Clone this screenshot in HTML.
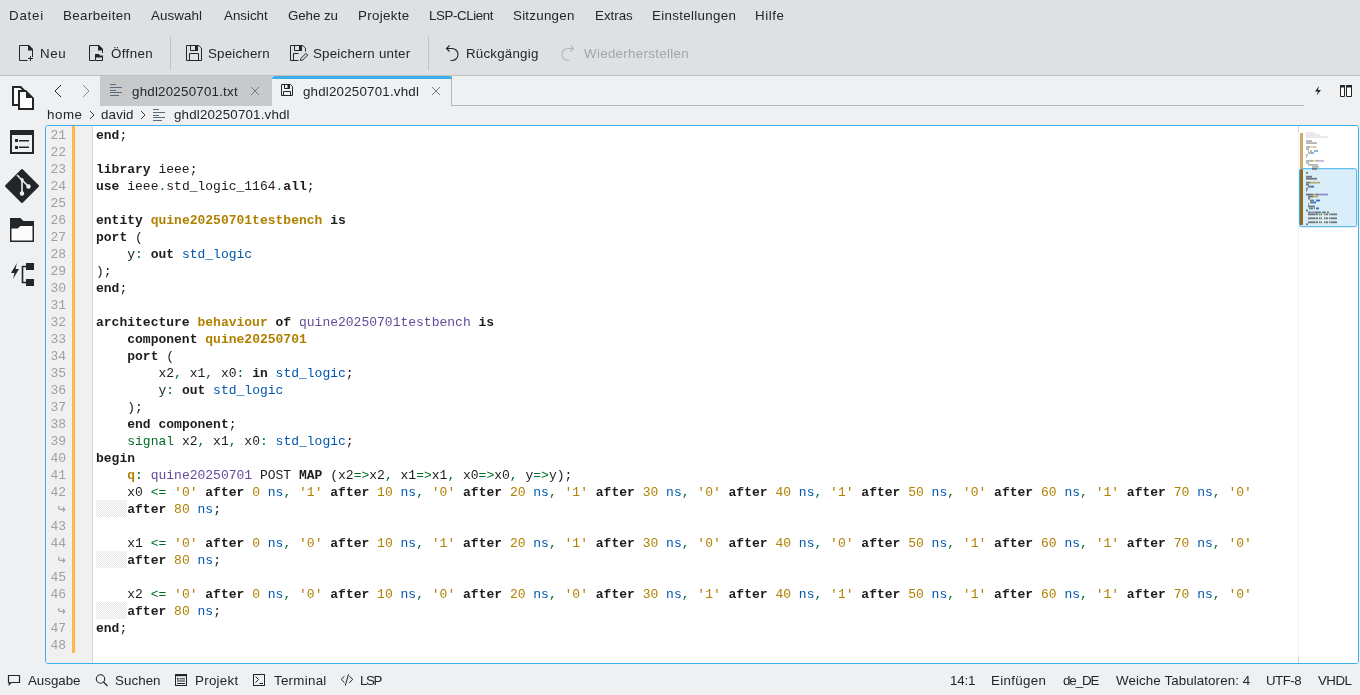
<!DOCTYPE html>
<html><head><meta charset="utf-8">
<style>
*{margin:0;padding:0;box-sizing:border-box}
html,body{width:1360px;height:695px;overflow:hidden;background:#eff0f1;font-family:"Liberation Sans",sans-serif;font-size:13.333px;color:#232629}
.a{position:absolute;white-space:pre}
#hdr{position:absolute;left:0;top:0;width:1360px;height:75px;background:#dee0e2}
#hdrline{position:absolute;left:0;top:75px;width:1360px;height:1px;background:#bdbfc1}
.mi{position:absolute;top:8px;line-height:16px;white-space:pre}
.tb{position:absolute;top:46px;line-height:16px;white-space:pre}
.sep{position:absolute;top:37px;width:1px;height:33px;background:#c0c2c4}
svg{position:absolute;overflow:visible}
#frame{position:absolute;left:45px;top:125px;width:1314px;height:539px;border:1px solid #3daee9;border-radius:3px;background:#fff;overflow:hidden}
#gutter{position:absolute;left:0;top:0;width:46px;height:100%;background:#f0f0f0}
#gsep{position:absolute;left:46px;top:0;width:1px;height:100%;background:#d6d6d6}
#mod{position:absolute;left:26px;top:0;width:3px;height:527px;background:#fdb749}
.ln{position:absolute;left:0;width:20px;margin-top:1px;text-align:right;font-family:"Liberation Mono",monospace;font-size:13px;line-height:17px;color:#a0a0a0}
.ln.wr{font-family:"Liberation Sans",sans-serif;font-size:11px;color:#a0a0a0}
#code{position:absolute;left:50px;top:1px}
.cl{position:absolute;left:0;white-space:pre;font-family:"Liberation Mono",monospace;font-size:13px;line-height:17px;color:#1f1c1b;letter-spacing:0.004px}
.cl b{font-weight:bold}
.cl i{font-style:normal}
.o{color:#006e28}.d{color:#b08000}.t{color:#0057ae}.f{color:#644a9b}
.wp{position:absolute;left:0;width:31px;height:17px;background-image:repeating-conic-gradient(#e4e4e4 0 25%,#fff 0 50%);background-size:2px 2px}
#mm{position:absolute;left:1252px;top:0;width:62px;height:100%;background:#fff}
.st{position:absolute;top:673px;line-height:16px;white-space:pre}
.tt{position:absolute;top:84px;line-height:16px;white-space:pre}
.bc{position:absolute;top:107px;line-height:16px;white-space:pre}
.mi,.tb,.st,.tt,.bc,.a,#code,#nums{will-change:transform}
</style></head><body>
<div id="hdr"></div>
<div id="hdrline"></div>
<!-- menu -->
<!-- toolbar -->
<div class="sep" style="left:170px"></div>
<div class="sep" style="left:428px"></div>
<!-- tab bar -->
<div style="position:absolute;left:100px;top:76px;width:172px;height:30px;background:#c8c9cb"></div>
<div style="position:absolute;left:272px;top:76px;width:180px;height:30px;border-right:1px solid #b6b8ba"></div>
<div style="position:absolute;left:272px;top:76px;width:180px;height:3px;background:#3daee9;border-radius:3px 3px 0 0"></div>
<div style="position:absolute;left:451px;top:105px;width:853px;height:1px;background:#b6b8ba"></div>
<svg width="1360" height="695" style="left:0;top:0" fill="none" stroke="#232629" stroke-width="1">
 <!-- New -->
 <path d="M27.5,60.5H19.5V45.5H28.5M32.5,50V57" />
 <path d="M28,45H29L33,49V50.5H28Z" fill="#232629" stroke="none"/>
 <path d="M30.5,56V61M28,58.5H33" />
 <!-- Open -->
 <path d="M95,60.5H89.5V45.5H98.5M102.5,50V53" />
 <path d="M98,45H99L103,49V50.5H98Z" fill="#232629" stroke="none"/>
 <path d="M95.5,54.5V60.5H102.5V56.5" />
 <path d="M95,54H99L100,55.5H103V57.5H95Z" fill="#232629" stroke="none"/>
 <!-- Save -->
 <path d="M186.5,45.5H198.8L201.5,48.2V60.5H186.5Z" />
 <path d="M190.5,45.5V50.5H197.5V45.5M189.5,60.5V53.5H198.5V60.5" />
 <rect x="195" y="45" width="3" height="6" fill="#232629" stroke="none"/>
 <!-- Save as -->
 <path d="M298.5,60.5H290.5V45.5H302.8L305.5,48.2V51.5" />
 <path d="M294.5,45.5V50.5H301.5V45.5M293.5,60V53.5H298.5" />
 <rect x="299" y="45" width="3" height="6" fill="#232629" stroke="none"/>
 <path d="M300.5,60.5L300.8,58.5L306,53.3L307.7,55L302.5,60.2Z" stroke-width="1"/>
 <!-- Undo -->
 <path d="M446.5,48.5H452A6,6 0 0 1 452,60.5H450.5M449.5,45.5L446.5,48.5L449.5,51.5" stroke-width="1.1"/>
 <!-- Redo -->
 <path d="M573.5,48.5H568A6,6 0 0 0 568,60.5H569.5M570.5,45.5L573.5,48.5L570.5,51.5" stroke="#b4b6b8" stroke-width="1.1"/>
 <!-- tab nav -->
 <path d="M61,85L55,91L61,97" />
 <path d="M83,85L89,91L83,97" stroke="#8a8c8e"/>
 <!-- txt icon -->
 <path d="M110,84.5H116M110,87.5H122M110,90.5H116M110,92.5H122M110,95.5H119" stroke="#5c6b7e"/>
 <!-- close x -->
 <path d="M251,87L259,95M259,87L251,95" stroke="#77797b"/>
 <path d="M432,87L440,95M440,87L432,95" stroke="#77797b"/>
 <!-- active tab save icon -->
 <path d="M281.5,84.5H290.5L292.5,86.5V95.5H281.5Z" />
 <path d="M284.5,84.5V88.5H289.5V84.5M283.5,95.5V91.5H290.5V95.5" />
 <rect x="287.5" y="84" width="2" height="5" fill="#232629" stroke="none"/>
 <!-- breadcrumb -->
 <path d="M90,111L94,115L90,119M141,111L145,115L141,119" stroke="#31363b"/>
 <path d="M153,109.5H159M153,112.5H165M153,115.5H159M153,117.5H165M153,120.5H162" stroke="#5c6b7e"/>
 <!-- right icons -->
 <path d="M1319,86L1315,91.5H1318L1316.5,95.5L1321,90H1318Z" fill="#232629" stroke="none"/>
 <path d="M1340.5,85.5H1344.5V96.5H1340.5ZM1346.5,85.5H1351.5V96.5H1346.5Z" fill="#fcfcfc"/>
 <rect x="1340" y="85" width="5" height="2.5" fill="#232629" stroke="none"/>
 <rect x="1346" y="85" width="6" height="2.5" fill="#232629" stroke="none"/>
 <!-- sidebar: documents -->
 <path d="M12,86H21L25,90V106H12Z" fill="#232629" stroke="none"/>
 <path d="M14,88H20L23,91V104H14Z" fill="#fcfcfc" stroke="none"/>
 <path d="M18,90H26L34,98V110H18Z" fill="#232629" stroke="none"/>
 <path d="M20,92H26V98H32V108H20Z" fill="#fcfcfc" stroke="none"/>
 <!-- sidebar: toc -->
 <path d="M10,130H34V154H10Z M12,135V152H32V135Z" fill="#232629" stroke="none" fill-rule="evenodd"/>
 <rect x="15" y="139" width="3" height="3" fill="#232629" stroke="none"/>
 <rect x="15" y="146" width="3" height="3" fill="#232629" stroke="none"/>
 <rect x="19" y="140" width="10" height="1.5" fill="#232629" stroke="none"/>
 <rect x="19" y="146.5" width="10" height="1.5" fill="#232629" stroke="none"/>
 <!-- sidebar: git -->
 <path d="M22,170L38,186L22,202L6,186Z" fill="#232629" stroke="#232629" stroke-width="2" stroke-linejoin="round"/>
 <path d="M17,175L22,180V194M22,180L28.5,186.5" stroke="#eff0f1" stroke-width="1.6"/>
 <circle cx="22" cy="179.5" r="1.6" fill="#eff0f1" stroke="none"/>
 <circle cx="28.5" cy="186.5" r="2.2" fill="#eff0f1" stroke="none"/>
 <circle cx="22" cy="193.5" r="2.2" fill="#eff0f1" stroke="none"/>
 <!-- sidebar: folder -->
 <path d="M10.75,224.75H33.25V241.25H10.75Z" stroke-width="1.5" fill="#fcfcfc"/>
 <path d="M10,218H20.5L23.5,221H34V226H20.5L17.5,228.5H10Z" fill="#232629" stroke="none"/>
 <!-- sidebar: bolt/tree -->
 <path d="M17,263L11,273H14.5L13,279L19,269H15.5Z" fill="#232629" stroke="none"/>
 <rect x="26" y="263" width="8" height="7" fill="#232629" stroke="none"/>
 <rect x="26" y="279" width="8" height="7" fill="#232629" stroke="none"/>
 <path d="M26,266.5H22.5V282.5H26" stroke-width="1.6"/>
 <!-- status icons -->
 <path d="M8.5,675.5H19.5V682.5H11L9.2,684.5V682.5H8.5Z" stroke-width="1.2"/>
 <circle cx="100.5" cy="679" r="4.2" stroke-width="1.1"/>
 <path d="M103.5,682L107.5,686" stroke-width="1.2"/>
 <rect x="175.5" y="674.5" width="11" height="11" />
 <rect x="175" y="674" width="12" height="2.2" fill="#232629" stroke="none"/>
 <rect x="177" y="678" width="1.6" height="1.6" fill="#232629" stroke="none"/>
 <path d="M179.5,678.8H185M177,681H185M177,683.5H185" />
 <rect x="253.5" y="674.5" width="11" height="11" />
 <path d="M255.5,676.5L258.5,679.5L255.5,682.5M259.5,683.5H263" />
 <path d="M344.5,676.2L341.2,679.4L344.5,682.7M349.3,676.2L352.8,679.4L349.3,682.7M348.5,674.2L345.3,685.5" />
</svg>

<div class="mi" id="tx0" style="left:9.42px;letter-spacing:0.760px;">Datei</div>
<div class="mi" id="tx1" style="left:62.92px;letter-spacing:0.391px;">Bearbeiten</div>
<div class="mi" id="tx2" style="left:151.30px;letter-spacing:0.107px;">Auswahl</div>
<div class="mi" id="tx3" style="left:223.64px;letter-spacing:0.000px;">Ansicht</div>
<div class="mi" id="tx4" style="left:288.22px;letter-spacing:-0.080px;">Gehe zu</div>
<div class="mi" id="tx5" style="left:357.50px;letter-spacing:0.320px;">Projekte</div>
<div class="mi" id="tx6" style="left:428.50px;letter-spacing:-0.409px;">LSP-CLient</div>
<div class="mi" id="tx7" style="left:513.08px;letter-spacing:0.260px;">Sitzungen</div>
<div class="mi" id="tx8" style="left:594.92px;letter-spacing:0.000px;">Extras</div>
<div class="mi" id="tx9" style="left:652.00px;letter-spacing:0.320px;">Einstellungen</div>
<div class="mi" id="tx10" style="left:755.04px;letter-spacing:0.560px;">Hilfe</div>
<div class="tb" id="tx11" style="left:40.08px;letter-spacing:0.640px;">Neu</div>
<div class="tb" id="tx12" style="left:111.30px;letter-spacing:0.384px;">Öffnen</div>
<div class="tb" id="tx13" style="left:208.42px;letter-spacing:0.200px;">Speichern</div>
<div class="tb" id="tx14" style="left:313.46px;letter-spacing:0.217px;">Speichern unter</div>
<div class="tb" id="tx15" style="left:466.08px;letter-spacing:0.213px;">Rückgängig</div>
<div class="tb" id="tx16" style="left:583.64px;letter-spacing:0.309px;color:#a3a5a7">Wiederherstellen</div>
<div class="tt" id="tx17" style="left:132.30px;letter-spacing:0.224px;">ghdl20250701.txt</div>
<div class="tt" id="tx18" style="left:303.30px;letter-spacing:0.200px;">ghdl20250701.vhdl</div>
<div class="bc" id="tx19" style="left:46.96px;letter-spacing:0.533px;">home</div>
<div class="bc" id="tx20" style="left:100.72px;letter-spacing:0.160px;">david</div>
<div class="bc" id="tx21" style="left:173.72px;letter-spacing:0.180px;">ghdl20250701.vhdl</div>
<div class="st" id="tx22" style="left:28.34px;letter-spacing:-0.027px;">Ausgabe</div>
<div class="st" id="tx23" style="left:115.04px;letter-spacing:0.064px;">Suchen</div>
<div class="st" id="tx24" style="left:194.54px;letter-spacing:0.293px;">Projekt</div>
<div class="st" id="tx25" style="left:273.80px;letter-spacing:0.274px;">Terminal</div>
<div class="st" id="tx26" style="left:360.42px;letter-spacing:-1.440px;">LSP</div>
<div class="st" id="tx27" style="left:949.96px;letter-spacing:-0.213px;">14:1</div>
<div class="st" id="tx28" style="left:990.58px;letter-spacing:0.320px;">Einfügen</div>
<div class="st" id="tx29" style="left:1062.72px;letter-spacing:-1.080px;">de_DE</div>
<div class="st" id="tx30" style="left:1115.80px;letter-spacing:0.104px;">Weiche Tabulatoren: 4</div>
<div class="st" id="tx31" style="left:1265.54px;letter-spacing:-0.520px;">UTF-8</div>
<div class="st" id="tx32" style="left:1317.68px;letter-spacing:-0.533px;">VHDL</div>
<!-- editor -->
<div id="frame">
  <div id="gutter">
    <div id="mod"></div>
    <div id="nums" style="position:absolute;left:0;top:0">
<div class="ln" style="top:0px">21</div>
<div class="ln" style="top:17px">22</div>
<div class="ln" style="top:34px">23</div>
<div class="ln" style="top:51px">24</div>
<div class="ln" style="top:68px">25</div>
<div class="ln" style="top:85px">26</div>
<div class="ln" style="top:102px">27</div>
<div class="ln" style="top:119px">28</div>
<div class="ln" style="top:136px">29</div>
<div class="ln" style="top:153px">30</div>
<div class="ln" style="top:170px">31</div>
<div class="ln" style="top:187px">32</div>
<div class="ln" style="top:204px">33</div>
<div class="ln" style="top:221px">34</div>
<div class="ln" style="top:238px">35</div>
<div class="ln" style="top:255px">36</div>
<div class="ln" style="top:272px">37</div>
<div class="ln" style="top:289px">38</div>
<div class="ln" style="top:306px">39</div>
<div class="ln" style="top:323px">40</div>
<div class="ln" style="top:340px">41</div>
<div class="ln" style="top:357px">42</div>
<svg width="46" height="17" style="position:absolute;left:0;top:374px" fill="none" stroke="#a0a0a0" stroke-width="1.1"><path d="M13.6,6 Q12,7.2 12.6,8.6 Q13,9.4 14.5,9.4 H18.6 M16.8,7.2 L18.8,9.4 L16.8,11.6"/></svg>
<div class="ln" style="top:391px">43</div>
<div class="ln" style="top:408px">44</div>
<svg width="46" height="17" style="position:absolute;left:0;top:425px" fill="none" stroke="#a0a0a0" stroke-width="1.1"><path d="M13.6,6 Q12,7.2 12.6,8.6 Q13,9.4 14.5,9.4 H18.6 M16.8,7.2 L18.8,9.4 L16.8,11.6"/></svg>
<div class="ln" style="top:442px">45</div>
<div class="ln" style="top:459px">46</div>
<svg width="46" height="17" style="position:absolute;left:0;top:476px" fill="none" stroke="#a0a0a0" stroke-width="1.1"><path d="M13.6,6 Q12,7.2 12.6,8.6 Q13,9.4 14.5,9.4 H18.6 M16.8,7.2 L18.8,9.4 L16.8,11.6"/></svg>
<div class="ln" style="top:493px">47</div>
<div class="ln" style="top:510px">48</div>
    </div>
  </div>
  <div id="gsep"></div>
  <div id="code">
<div class="cl" style="top:0px"><b>end</b>;</div>
<div class="cl" style="top:17px"></div>
<div class="cl" style="top:34px"><b>library</b> ieee;</div>
<div class="cl" style="top:51px"><b>use</b> ieee<i class="o">.</i>std_logic_1164<i class="o">.</i><b>all</b>;</div>
<div class="cl" style="top:68px"></div>
<div class="cl" style="top:85px"><b>entity</b> <b class="d">quine20250701testbench</b> <b>is</b></div>
<div class="cl" style="top:102px"><b>port</b> (</div>
<div class="cl" style="top:119px">    y<i class="o">:</i> <b>out</b> <i class="t">std_logic</i></div>
<div class="cl" style="top:136px">);</div>
<div class="cl" style="top:153px"><b>end</b>;</div>
<div class="cl" style="top:170px"></div>
<div class="cl" style="top:187px"><b>architecture</b> <b class="d">behaviour</b> <b>of</b> <i class="f">quine20250701testbench</i> <b>is</b></div>
<div class="cl" style="top:204px">    <b>component</b> <b class="d">quine20250701</b></div>
<div class="cl" style="top:221px">    <b>port</b> (</div>
<div class="cl" style="top:238px">        x2<i class="o">,</i> x1<i class="o">,</i> x0<i class="o">:</i> <b>in</b> <i class="t">std_logic</i>;</div>
<div class="cl" style="top:255px">        y<i class="o">:</i> <b>out</b> <i class="t">std_logic</i></div>
<div class="cl" style="top:272px">    );</div>
<div class="cl" style="top:289px">    <b>end</b> <b>component</b>;</div>
<div class="cl" style="top:306px">    <i class="o">signal</i> x2<i class="o">,</i> x1<i class="o">,</i> x0<i class="o">:</i> <i class="t">std_logic</i>;</div>
<div class="cl" style="top:323px"><b>begin</b></div>
<div class="cl" style="top:340px">    <b class="d">q</b><i class="o">:</i> <i class="f">quine20250701</i> POST <b>MAP</b> (x2<i class="o">=&gt;</i>x2<i class="o">,</i> x1<i class="o">=&gt;</i>x1<i class="o">,</i> x0<i class="o">=&gt;</i>x0<i class="o">,</i> y<i class="o">=&gt;</i>y);</div>
<div class="cl" style="top:357px">    x0 <i class="o">&lt;=</i> <i class="d">'0'</i> <b>after</b> <i class="d">0</i> <i class="t">ns</i><i class="o">,</i> <i class="d">'1'</i> <b>after</b> <i class="d">10</i> <i class="t">ns</i><i class="o">,</i> <i class="d">'0'</i> <b>after</b> <i class="d">20</i> <i class="t">ns</i><i class="o">,</i> <i class="d">'1'</i> <b>after</b> <i class="d">30</i> <i class="t">ns</i><i class="o">,</i> <i class="d">'0'</i> <b>after</b> <i class="d">40</i> <i class="t">ns</i><i class="o">,</i> <i class="d">'1'</i> <b>after</b> <i class="d">50</i> <i class="t">ns</i><i class="o">,</i> <i class="d">'0'</i> <b>after</b> <i class="d">60</i> <i class="t">ns</i><i class="o">,</i> <i class="d">'1'</i> <b>after</b> <i class="d">70</i> <i class="t">ns</i><i class="o">,</i> <i class="d">'0'</i></div>
<div class="wp" style="top:373px"></div>
<div class="cl" style="top:374px">    <b>after</b> <i class="d">80</i> <i class="t">ns</i>;</div>
<div class="cl" style="top:391px"></div>
<div class="cl" style="top:408px">    x1 <i class="o">&lt;=</i> <i class="d">'0'</i> <b>after</b> <i class="d">0</i> <i class="t">ns</i><i class="o">,</i> <i class="d">'0'</i> <b>after</b> <i class="d">10</i> <i class="t">ns</i><i class="o">,</i> <i class="d">'1'</i> <b>after</b> <i class="d">20</i> <i class="t">ns</i><i class="o">,</i> <i class="d">'1'</i> <b>after</b> <i class="d">30</i> <i class="t">ns</i><i class="o">,</i> <i class="d">'0'</i> <b>after</b> <i class="d">40</i> <i class="t">ns</i><i class="o">,</i> <i class="d">'0'</i> <b>after</b> <i class="d">50</i> <i class="t">ns</i><i class="o">,</i> <i class="d">'1'</i> <b>after</b> <i class="d">60</i> <i class="t">ns</i><i class="o">,</i> <i class="d">'1'</i> <b>after</b> <i class="d">70</i> <i class="t">ns</i><i class="o">,</i> <i class="d">'0'</i></div>
<div class="wp" style="top:424px"></div>
<div class="cl" style="top:425px">    <b>after</b> <i class="d">80</i> <i class="t">ns</i>;</div>
<div class="cl" style="top:442px"></div>
<div class="cl" style="top:459px">    x2 <i class="o">&lt;=</i> <i class="d">'0'</i> <b>after</b> <i class="d">0</i> <i class="t">ns</i><i class="o">,</i> <i class="d">'0'</i> <b>after</b> <i class="d">10</i> <i class="t">ns</i><i class="o">,</i> <i class="d">'0'</i> <b>after</b> <i class="d">20</i> <i class="t">ns</i><i class="o">,</i> <i class="d">'0'</i> <b>after</b> <i class="d">30</i> <i class="t">ns</i><i class="o">,</i> <i class="d">'1'</i> <b>after</b> <i class="d">40</i> <i class="t">ns</i><i class="o">,</i> <i class="d">'1'</i> <b>after</b> <i class="d">50</i> <i class="t">ns</i><i class="o">,</i> <i class="d">'1'</i> <b>after</b> <i class="d">60</i> <i class="t">ns</i><i class="o">,</i> <i class="d">'1'</i> <b>after</b> <i class="d">70</i> <i class="t">ns</i><i class="o">,</i> <i class="d">'0'</i></div>
<div class="wp" style="top:475px"></div>
<div class="cl" style="top:476px">    <b>after</b> <i class="d">80</i> <i class="t">ns</i>;</div>
<div class="cl" style="top:493px"><b>end</b>;</div>
<div class="cl" style="top:510px"></div>
  </div>
  <div id="mm"><svg width="62" height="537" style="position:absolute;left:0;top:0"><rect x="0" y="0" width="1" height="537" fill="#f0f0f0"/><rect x="0" y="0" width="1" height="6" fill="#d4d4d4"/><rect x="0" y="531" width="1" height="6" fill="#d4d4d4"/><rect x="2" y="7" width="3" height="35.19999999999999" fill="#cea76a"/><rect x="1.5" y="42.69999999999999" width="57.200000000000045" height="58.0" rx="2" fill="#daeefa" stroke="#3daee9" stroke-width="1"/><rect x="2" y="43.19999999999999" width="3" height="55.80000000000001" fill="#8e6b24"/><rect x="8" y="6.28" width="9" height="1.8" fill="#e6e6e6"/><rect x="8" y="8.26" width="14" height="1.8" fill="#e6e6e6"/><rect x="8" y="10.24" width="22" height="1.8" fill="#e6e6e6"/><rect x="8" y="14.20" width="6" height="1.8" fill="#b4b4b4"/><rect x="8" y="16.18" width="11" height="1.8" fill="#b4b4b4"/><rect x="8" y="20.14" width="4" height="1.8" fill="#b4b4b4"/><rect x="12" y="20.14" width="5" height="1.8" fill="#e6d29c"/><rect x="17" y="20.14" width="1" height="1.8" fill="#b4b4b4"/><rect x="8" y="22.12" width="3" height="1.8" fill="#b4b4b4"/><rect x="10" y="24.10" width="1" height="1.8" fill="#b4b4b4"/><rect x="12" y="24.10" width="2" height="1.8" fill="#b4b4b4"/><rect x="16" y="24.10" width="4" height="1.8" fill="#7aaee0"/><rect x="10" y="26.08" width="3" height="1.8" fill="#b4b4b4"/><rect x="13" y="26.08" width="3" height="1.8" fill="#7aaee0"/><rect x="8" y="28.06" width="2" height="1.8" fill="#b4b4b4"/><rect x="8" y="30.04" width="1" height="1.8" fill="#b4b4b4"/><rect x="8" y="34.00" width="7" height="1.8" fill="#b4b4b4"/><rect x="15" y="34.00" width="3" height="1.8" fill="#e6d29c"/><rect x="18" y="34.00" width="2" height="1.8" fill="#b4b4b4"/><rect x="20" y="34.00" width="5" height="1.8" fill="#c4b6e2"/><rect x="25" y="34.00" width="1" height="1.8" fill="#b4b4b4"/><rect x="8" y="35.98" width="3" height="1.8" fill="#b4b4b4"/><rect x="10" y="37.96" width="2" height="1.8" fill="#b4b4b4"/><rect x="12" y="37.96" width="1" height="1.8" fill="#9ed2ac"/><rect x="13" y="37.96" width="7" height="1.8" fill="#b4b4b4"/><rect x="14" y="39.94" width="7" height="1.8" fill="#b4b4b4"/><rect x="14" y="41.92" width="5" height="1.8" fill="#6f7880"/><rect x="8" y="45.88" width="2" height="1.8" fill="#6f7880"/><rect x="8" y="49.84" width="6" height="1.8" fill="#6f7880"/><rect x="8" y="51.82" width="11" height="1.8" fill="#6f7880"/><rect x="8" y="55.78" width="4" height="1.8" fill="#6f7880"/><rect x="12" y="55.78" width="10" height="1.8" fill="#b4ac70"/><rect x="8" y="57.76" width="3" height="1.8" fill="#6f7880"/><rect x="10" y="59.74" width="3" height="1.8" fill="#6f7880"/><rect x="13" y="59.74" width="3" height="1.8" fill="#2a74c4"/><rect x="8" y="61.72" width="2" height="1.8" fill="#6f7880"/><rect x="8" y="63.70" width="1" height="1.8" fill="#6f7880"/><rect x="8" y="67.66" width="7" height="1.8" fill="#6f7880"/><rect x="15" y="67.66" width="3" height="1.8" fill="#b4ac70"/><rect x="18" y="67.66" width="2" height="1.8" fill="#6f7880"/><rect x="20" y="67.66" width="10" height="1.8" fill="#9088cc"/><rect x="10" y="69.64" width="5" height="1.8" fill="#6f7880"/><rect x="15" y="69.64" width="5" height="1.8" fill="#b4ac70"/><rect x="10" y="71.62" width="2" height="1.8" fill="#6f7880"/><rect x="12" y="73.60" width="4" height="1.8" fill="#6f7880"/><rect x="18" y="73.60" width="4" height="1.8" fill="#2a74c4"/><rect x="12" y="75.58" width="3" height="1.8" fill="#6f7880"/><rect x="15" y="75.58" width="3" height="1.8" fill="#2a74c4"/><rect x="10" y="77.56" width="1" height="1.8" fill="#6f7880"/><rect x="10" y="79.54" width="7" height="1.8" fill="#6f7880"/><rect x="11" y="81.52" width="2" height="1.8" fill="#4aa878"/><rect x="13" y="81.52" width="2" height="1.8" fill="#6f7880"/><rect x="16" y="81.52" width="1" height="1.8" fill="#6f7880"/><rect x="18" y="81.52" width="3" height="1.8" fill="#2a74c4"/><rect x="8" y="83.50" width="2" height="1.8" fill="#6f7880"/><rect x="10" y="85.48" width="2" height="1.8" fill="#6f7880"/><rect x="12" y="85.48" width="5" height="1.8" fill="#9088cc"/><rect x="17" y="85.48" width="5" height="1.8" fill="#6f7880"/><rect x="22" y="85.48" width="1" height="1.8" fill="#4aa878"/><rect x="24" y="85.48" width="3" height="1.8" fill="#6f7880"/><rect x="27" y="85.48" width="1" height="1.8" fill="#4aa878"/><rect x="29" y="85.48" width="1" height="1.8" fill="#6f7880"/><rect x="30" y="85.48" width="1" height="1.8" fill="#4aa878"/><rect x="8" y="97.36" width="2" height="1.8" fill="#6f7880"/><rect x="10" y="87.46" width="7" height="1.8" fill="#6f7880"/><rect x="17" y="87.46" width="1" height="1.8" fill="#b4ac70"/><rect x="18" y="87.46" width="2" height="1.8" fill="#6f7880"/><rect x="21" y="87.46" width="1" height="1.8" fill="#6f7880"/><rect x="22" y="87.46" width="1" height="1.8" fill="#b4ac70"/><rect x="23" y="87.46" width="1" height="1.8" fill="#6f7880"/><rect x="26" y="87.46" width="1" height="1.8" fill="#6f7880"/><rect x="27" y="87.46" width="1" height="1.8" fill="#b4ac70"/><rect x="28" y="87.46" width="2" height="1.8" fill="#6f7880"/><rect x="31" y="87.46" width="1" height="1.8" fill="#6f7880"/><rect x="32" y="87.46" width="1" height="1.8" fill="#b4ac70"/><rect x="33" y="87.46" width="6" height="1.8" fill="#6f7880"/><rect x="10" y="91.42" width="7" height="1.8" fill="#6f7880"/><rect x="17" y="91.42" width="1" height="1.8" fill="#b4ac70"/><rect x="18" y="91.42" width="2" height="1.8" fill="#6f7880"/><rect x="21" y="91.42" width="1" height="1.8" fill="#6f7880"/><rect x="22" y="91.42" width="1" height="1.8" fill="#b4ac70"/><rect x="23" y="91.42" width="1" height="1.8" fill="#6f7880"/><rect x="26" y="91.42" width="1" height="1.8" fill="#6f7880"/><rect x="27" y="91.42" width="1" height="1.8" fill="#b4ac70"/><rect x="28" y="91.42" width="2" height="1.8" fill="#6f7880"/><rect x="31" y="91.42" width="1" height="1.8" fill="#6f7880"/><rect x="32" y="91.42" width="1" height="1.8" fill="#b4ac70"/><rect x="33" y="91.42" width="6" height="1.8" fill="#6f7880"/><rect x="10" y="95.38" width="7" height="1.8" fill="#6f7880"/><rect x="17" y="95.38" width="1" height="1.8" fill="#b4ac70"/><rect x="18" y="95.38" width="2" height="1.8" fill="#6f7880"/><rect x="21" y="95.38" width="1" height="1.8" fill="#6f7880"/><rect x="22" y="95.38" width="1" height="1.8" fill="#b4ac70"/><rect x="23" y="95.38" width="1" height="1.8" fill="#6f7880"/><rect x="26" y="95.38" width="1" height="1.8" fill="#6f7880"/><rect x="27" y="95.38" width="1" height="1.8" fill="#b4ac70"/><rect x="28" y="95.38" width="2" height="1.8" fill="#6f7880"/><rect x="31" y="95.38" width="1" height="1.8" fill="#6f7880"/><rect x="32" y="95.38" width="1" height="1.8" fill="#b4ac70"/><rect x="33" y="95.38" width="6" height="1.8" fill="#6f7880"/></svg></div>
</div>
<!-- status -->
</body></html>
